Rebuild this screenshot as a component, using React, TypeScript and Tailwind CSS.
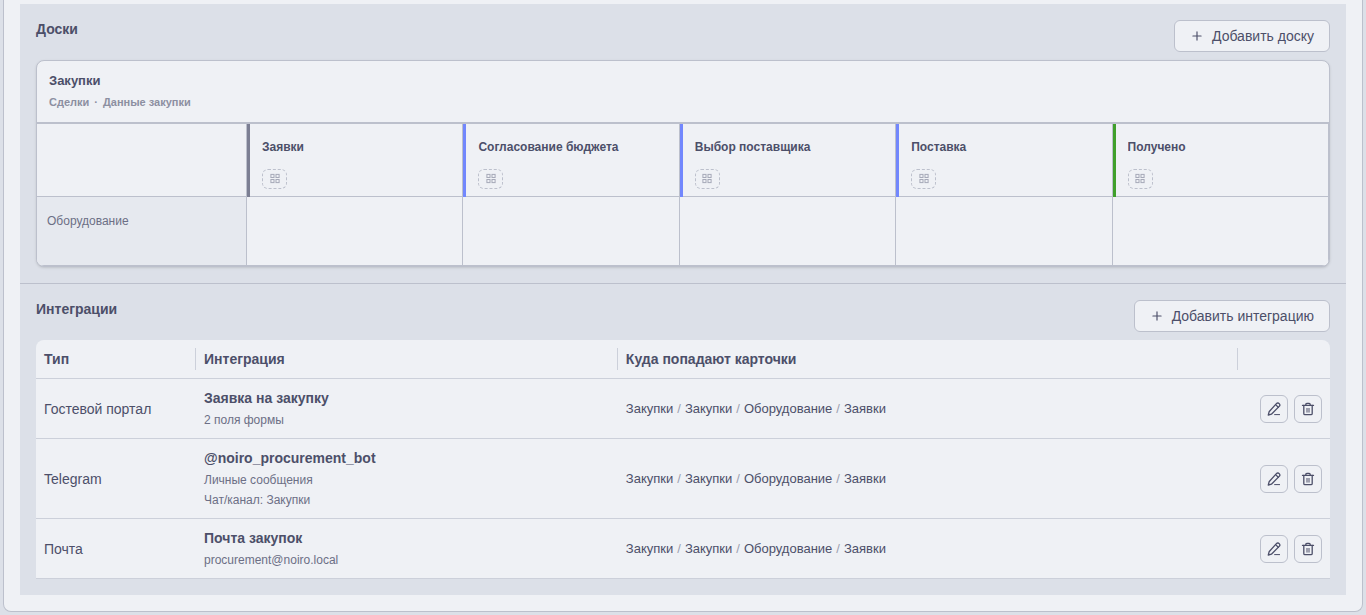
import { Plus } from "lucide-react";
import type { ReactNode } from "react";

type Stage = { name: string; bar: string };
type Integration = { type: string; name: string; details: string[]; path: string[] };

const stages: Stage[] = [
  { name: "Заявки", bar: "bg-[#7c7f93]" },
  { name: "Согласование бюджета", bar: "bg-[#7287fd]" },
  { name: "Выбор поставщика", bar: "bg-[#7287fd]" },
  { name: "Поставка", bar: "bg-[#7287fd]" },
  { name: "Получено", bar: "bg-[#40a02b]" },
];

const target = ["Закупки", "Закупки", "Оборудование", "Заявки"];

const integrations: Integration[] = [
  { type: "Гостевой портал", name: "Заявка на закупку", details: ["2 поля формы"], path: target },
  {
    type: "Telegram",
    name: "@noiro_procurement_bot",
    details: ["Личные сообщения", "Чат/канал: Закупки"],
    path: target,
  },
  { type: "Почта", name: "Почта закупок", details: ["procurement@noiro.local"], path: target },
];

function PencilIcon() {
  return (
    <svg
      className="size-4"
      viewBox="0 0 16 16"
      fill="none"
      stroke="currentColor"
      strokeWidth="1.3"
      strokeLinecap="round"
      strokeLinejoin="round"
      aria-hidden="true"
    >
      <path d="M10.4 2.6a1.95 1.95 0 0 1 2.8 2.8L5.4 13.2l-3.1.8.8-3.2Z" />
      <path d="m9.6 3.6 2.7 2.7" />
      <path d="M8.6 13.6h5" strokeWidth="1" />
    </svg>
  );
}

function TrashIcon() {
  return (
    <svg
      className="size-4"
      viewBox="0 0 16 16"
      fill="none"
      stroke="currentColor"
      strokeWidth="1.3"
      strokeLinecap="round"
      strokeLinejoin="round"
      aria-hidden="true"
    >
      <path d="M2.5 4.4h11" />
      <path d="M3.8 4.4v8.1c0 .8.5 1.2 1.2 1.2h6c.7 0 1.2-.4 1.2-1.2V4.4" />
      <path d="M5.8 4.2v-.8c0-.7.4-1.1 1.1-1.1h2.2c.7 0 1.1.4 1.1 1.1v.8" />
      <path d="M7 7.4v3.8M9 7.4v3.8" strokeWidth="1" />
    </svg>
  );
}

function GridIcon() {
  return (
    <svg className="size-3" viewBox="0 0 12 12" fill="none" stroke="currentColor" aria-hidden="true">
      <rect x="1.9" y="1.4" width="3.1" height="3.1" />
      <rect x="7" y="1.4" width="3.1" height="3.1" />
      <rect x="1.9" y="6.5" width="3.1" height="3.1" />
      <rect x="7" y="6.5" width="3.1" height="3.1" />
    </svg>
  );
}

function SectionHeader({ title, action }: { title: string; action: string }) {
  return (
    <div className="mb-2 flex items-start justify-between">
      <h2 className="text-sm leading-[18px] font-bold">{title}</h2>
      <button
        type="button"
        className="flex h-8 items-center gap-2 rounded-md border border-[#bcc0cc] bg-[#eff1f5] px-[15px] text-sm"
      >
        <Plus size={14} aria-hidden="true" />
        {action}
      </button>
    </div>
  );
}

function IconButton({ label, children }: { label: string; children: ReactNode }) {
  return (
    <button
      type="button"
      aria-label={label}
      className="flex size-7 items-center justify-center rounded-md border border-[#bcc0cc] bg-[#eff1f5]"
    >
      {children}
    </button>
  );
}

function Board() {
  return (
    <article className="overflow-hidden rounded-lg border border-[#bcc0cc] bg-[#eff1f5] shadow-sm">
      <header className="border-b border-[#bcc0cc] px-3 pt-3 pb-3">
        <h3 className="text-[13px] leading-4 font-bold">Закупки</h3>
        <p className="mt-[6px] flex gap-[5px] text-[11px] leading-[15px] font-bold text-[#8c8fa1]">
          <span>Сделки</span>
          <span>·</span>
          <span>Данные закупки</span>
        </p>
      </header>
      <div className="grid grid-cols-[210px_repeat(5,minmax(0,1fr))] border-t border-[#bcc0cc]">
        <div className="border-r border-b border-[#bcc0cc]" />
        {stages.map((stage) => (
          <div key={stage.name} className="flex h-[73px]">
            <div className={`w-[3px] shrink-0 ${stage.bar}`} />
            <div className="min-w-0 flex-1 border-r border-b border-[#bcc0cc] px-3 pt-[15px]">
              <h4 className="truncate text-xs font-bold">{stage.name}</h4>
              <button
                type="button"
                aria-label={`Поля карточки: ${stage.name}`}
                className="mt-[14px] flex h-5 w-[25px] items-center justify-center rounded-md border border-dashed border-[#bcc0cc] text-[#a6a9b8]"
              >
                <GridIcon />
              </button>
            </div>
          </div>
        ))}
        <div className="h-[69px] border-r border-b border-[#bcc0cc] bg-[#e6e9ef] px-[10px] py-4 text-xs text-[#6c6f85]">
          Оборудование
        </div>
        {stages.map((stage) => (
          <div key={stage.name} className="border-r border-b border-[#bcc0cc]" />
        ))}
      </div>
    </article>
  );
}

function IntegrationsTable() {
  return (
    <table className="w-full table-fixed border-separate border-spacing-0 rounded-t-lg bg-[#eff1f5] text-left text-sm leading-[22px]">
      <colgroup>
        <col className="w-40" />
        <col className="w-[32.6%]" />
        <col />
        <col className="w-[92px]" />
      </colgroup>
      <thead>
        <tr>
          {["Тип", "Интеграция", "Куда попадают карточки"].map((title) => (
            <th key={title} scope="col" className="border-b border-[#ccd0da] py-2 pl-2 font-bold">
              <div className="border-r border-[#ccd0da]">{title}</div>
            </th>
          ))}
          <th scope="col" aria-label="Действия" className="border-b border-[#ccd0da]" />
        </tr>
      </thead>
      <tbody>
        {integrations.map((item) => (
          <tr key={item.type}>
            <td className="border-b border-[#ccd0da] p-2">{item.type}</td>
            <td className="border-b border-[#ccd0da] p-2">
              <div className="mb-px font-bold">{item.name}</div>
              {item.details.map((line) => (
                <div key={line} className="text-xs leading-5 text-[#6c6f85]">
                  {line}
                </div>
              ))}
            </td>
            <td className="border-b border-[#ccd0da] p-2 text-[13px]">
              {item.path.map((part, i) => (
                <span key={i}>
                  {i > 0 && <span className="mx-1 text-[#9ca0b0]">/</span>}
                  {part}
                </span>
              ))}
            </td>
            <td className="border-b border-[#ccd0da] p-2">
              <div className="flex justify-end gap-[6px]">
                <IconButton label="Изменить">
                  <PencilIcon />
                </IconButton>
                <IconButton label="Удалить">
                  <TrashIcon />
                </IconButton>
              </div>
            </td>
          </tr>
        ))}
      </tbody>
    </table>
  );
}

export default function App() {
  return (
    <div className="min-h-screen bg-[#dce0e8] px-[3px] pb-[3px] font-['Liberation_Sans',Arial,sans-serif] text-[#4c4f69]">
      <main className="rounded-b-lg border border-t-0 border-[#bcc0cc] bg-[#eff1f5] px-4 pt-1 pb-4">
        <div className="bg-[#dce0e8]">
          <section className="border-b border-[#bcc0cc] p-4">
            <SectionHeader title="Доски" action="Добавить доску" />
            <Board />
          </section>
          <section className="p-4">
            <SectionHeader title="Интеграции" action="Добавить интеграцию" />
            <IntegrationsTable />
          </section>
        </div>
      </main>
    </div>
  );
}
